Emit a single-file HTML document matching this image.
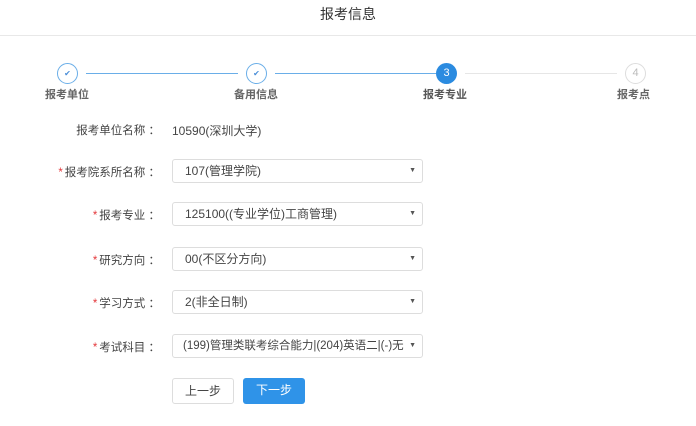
<!DOCTYPE html>
<html><head><meta charset="utf-8"><style>
*{margin:0;padding:0;box-sizing:border-box}
body{width:696px;height:426px;background:#fff;font-family:"Liberation Sans","Noto Sans CJK SC",sans-serif;position:relative;overflow:hidden;color:#333}
.a{position:absolute}
.title{left:0;width:696px;top:4px;text-align:center;font-size:14px;color:#333}
.sep{left:0;width:696px;top:35px;height:1px;background:#e8e8e8}
.c{width:21px;height:21px;border-radius:50%;top:63px;text-align:center;font-size:11px;line-height:19px}
.ck{border:1.5px solid #6aaee8;color:#4a8ed8;font-size:8px}
.ln{top:73px;height:1px}
.sl{top:86px;font-size:11px;font-weight:bold;color:#666}
.lab{font-size:11.5px;color:#444;text-align:right;width:160px;left:0}
.lab b{color:#e4393c;font-weight:normal;margin-right:2px}
.sel{left:172px;width:251px;height:24px;border:1px solid #ddd;border-radius:3px;font-size:12px;color:#444;padding-left:12px;line-height:22px;white-space:nowrap;overflow:hidden}
.sel:after{content:"▼";position:absolute;right:6px;top:0;font-size:7px;color:#555;background:#fff;padding-left:2px}
.btn{top:378px;height:26px;border-radius:3px;font-size:12px;text-align:center;line-height:24px}
</style></head><body>
<div class="a title">报考信息</div>
<div class="a sep"></div>
<div class="a c ck" style="left:57px">✔</div>
<div class="a c ck" style="left:246px">✔</div>
<div class="a c" style="left:436px;background:#2b8be0;color:#fff;line-height:21px">3</div>
<div class="a c" style="left:625px;border:1.5px solid #ddd;color:#bbb">4</div>
<div class="a ln" style="left:86px;width:152px;background:#6aaee8"></div>
<div class="a ln" style="left:275px;width:161px;background:#6aaee8"></div>
<div class="a ln" style="left:465px;width:152px;background:#e6e6e6"></div>
<div class="a sl" style="left:45px">报考单位</div>
<div class="a sl" style="left:234px">备用信息</div>
<div class="a sl" style="left:423px;color:#555">报考专业</div>
<div class="a sl" style="left:617px">报考点</div>
<div class="a lab" style="top:122px">报考单位名称 ：</div>
<div class="a" style="left:172px;top:122px;font-size:12px;color:#444">10590(深圳大学)</div>
<div class="a lab" style="top:164px"><b>*</b>报考院系所名称 ：</div>
<div class="a sel" style="top:159px">107(管理学院)</div>
<div class="a lab" style="top:207px"><b>*</b>报考专业 ：</div>
<div class="a sel" style="top:202px">125100((专业学位)工商管理)</div>
<div class="a lab" style="top:252px"><b>*</b>研究方向 ：</div>
<div class="a sel" style="top:247px">00(不区分方向)</div>
<div class="a lab" style="top:295px"><b>*</b>学习方式 ：</div>
<div class="a sel" style="top:290px">2(非全日制)</div>
<div class="a lab" style="top:339px"><b>*</b>考试科目 ：</div>
<div class="a sel" style="top:334px;padding-left:10px;font-size:11.5px">(199)管理类联考综合能力|(204)英语二|(-)无</div>
<div class="a btn" style="left:172px;width:62px;border:1px solid #ddd;color:#444">上一步</div>
<div class="a btn" style="left:243px;width:62px;background:#2f93e8;color:#fff">下一步</div>
</body></html>
